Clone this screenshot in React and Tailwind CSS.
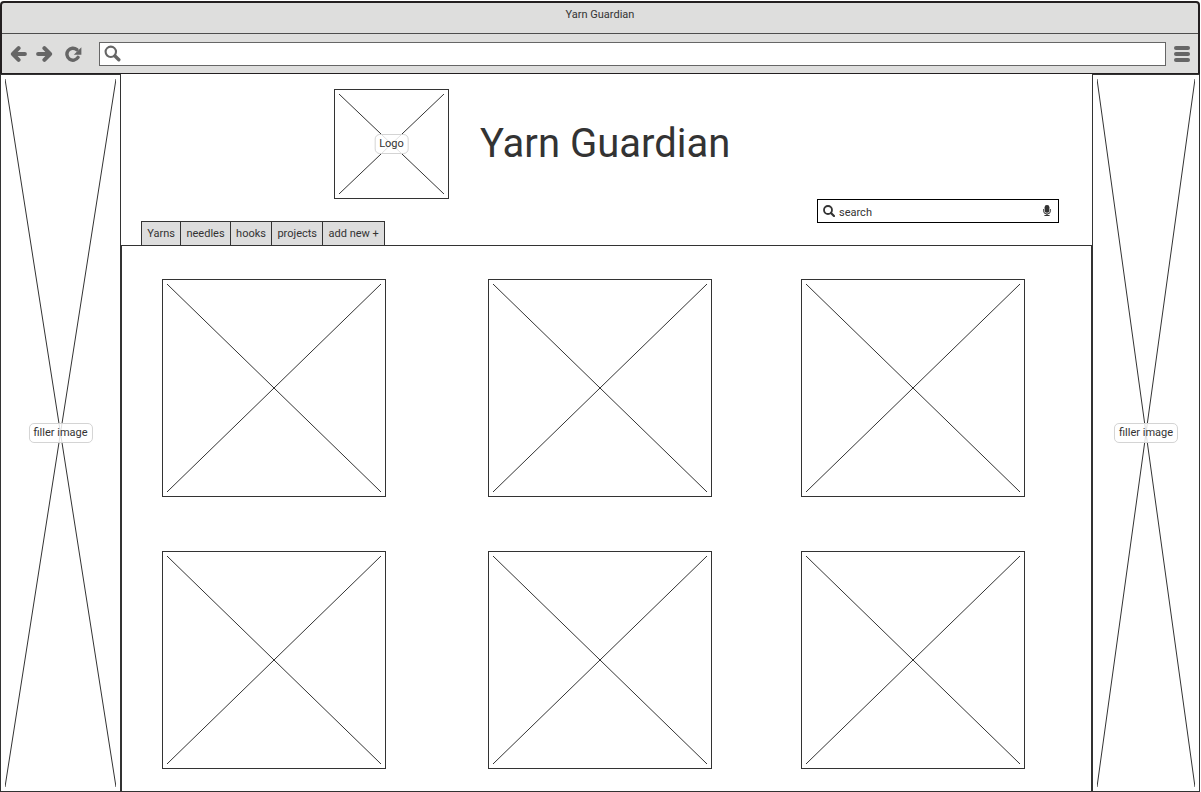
import React from "react";

const tabs = ["Yarns", "needles", "hooks", "projects", "add new +"];
const yarns = [1, 2, 3, 4, 5, 6];

function Placeholder({ label, className }) {
  return (
    <figure className={`relative border border-[#333333] bg-white p-1 ${className}`}>
      <svg
        className="absolute inset-1 h-[calc(100%-8px)] w-[calc(100%-8px)]"
        viewBox="0 0 100 100"
        preserveAspectRatio="none"
        stroke="#333333"
        aria-hidden="true"
      >
        <path d="M0 0L100 100M100 0L0 100" vectorEffect="non-scaling-stroke" />
      </svg>
      {label && (
        <figcaption className="absolute top-1/2 left-1/2 -translate-x-1/2 -translate-y-1/2 rounded-[5px] border border-[#d4d4d4] bg-white/85 px-1 text-[11px] leading-[18px] whitespace-nowrap">
          {label}
        </figcaption>
      )}
    </figure>
  );
}

function ArrowIcon({ flip }) {
  return (
    <svg
      width="17"
      height="16"
      viewBox="0 0 17 16"
      fill="none"
      stroke="#666666"
      strokeWidth="4"
      strokeLinecap="round"
      strokeLinejoin="round"
      className={flip ? "rotate-180" : ""}
      aria-hidden="true"
    >
      <path d="M8.6 2.2L2.9 8l5.7 5.8M3.8 8H14.9" />
    </svg>
  );
}

function ReloadIcon() {
  return (
    <svg width="17" height="16" viewBox="0 0 17 16" aria-hidden="true">
      <path
        d="M13 11.4A6 6 0 1 1 11.8 3.6"
        fill="none"
        stroke="#666666"
        strokeWidth="3.4"
        strokeLinecap="round"
      />
      <path d="M16.4 1.2V8.8H8.8Z" fill="#666666" />
    </svg>
  );
}

function MagnifierIcon() {
  return (
    <svg width="17" height="17" viewBox="0 0 17 17" fill="none" stroke="#666666" aria-hidden="true">
      <circle cx="6.8" cy="6.8" r="5.2" strokeWidth="2.1" />
      <path d="M11 11L14.8 14.7" strokeWidth="3.4" strokeLinecap="round" />
    </svg>
  );
}

function BrowserBar() {
  return (
    <header className="mt-px rounded-t border-2 border-b border-[#231f20] bg-[#dededd]">
      <p className="h-[31px] border-b border-[#4d4d4d] text-center text-[11px] leading-6">
        Yarn Guardian
      </p>
      <div className="flex h-[39px] items-center px-2">
        <nav className="flex items-center" aria-label="Browser">
          <button type="button" aria-label="Back" className="mr-[9px]">
            <ArrowIcon />
          </button>
          <button type="button" aria-label="Forward" className="mr-3">
            <ArrowIcon flip />
          </button>
          <button type="button" aria-label="Reload" className="mr-[17px]">
            <ReloadIcon />
          </button>
        </nav>
        <label className="flex h-6 flex-1 items-center gap-1 border border-[#666666] bg-white px-1">
          <MagnifierIcon />
          <input type="text" aria-label="Address" className="min-w-0 flex-1 outline-none" />
        </label>
        <button type="button" aria-label="Menu" className="ml-2">
          <svg width="16" height="16" viewBox="0 0 16 16" fill="#666666" aria-hidden="true">
            <rect width="16" height="4" rx="2" />
            <rect y="6" width="16" height="4" rx="2" />
            <rect y="12" width="16" height="4" rx="2" />
          </svg>
        </button>
      </div>
    </header>
  );
}

function SearchBox() {
  return (
    <label className="mr-[33px] flex h-6 w-[242px] items-center self-start border border-black bg-white px-[5px]">
      <svg width="12" height="12" viewBox="0 0 12 12" fill="none" stroke="#333333" aria-hidden="true">
        <circle cx="5" cy="5" r="4" strokeWidth="1.8" />
        <path d="M8 8L11 11" strokeWidth="2.2" strokeLinecap="round" />
      </svg>
      <input
        type="search"
        placeholder="search"
        aria-label="Search"
        className="ml-1 h-full min-w-0 flex-1 pt-0.5 text-[11px] outline-none placeholder:text-[#333333]"
      />
      <svg width="12" height="12" viewBox="0 0 12 12" aria-hidden="true">
        <rect x="3.6" y="0" width="4.8" height="7.8" rx="2.2" fill="#333333" />
        <path
          d="M2.5 4.6V5.6a3.5 3.5 0 0 0 7 0V4.6M6 9.2V10.5M3.8 10.5H8.2"
          fill="none"
          stroke="#333333"
          strokeLinecap="round"
        />
      </svg>
    </label>
  );
}

export default function App() {
  return (
    <div className="flex min-h-screen flex-col bg-white pr-px font-['Roboto',sans-serif] text-[#333333]">
      <BrowserBar />
      <div className="flex flex-1 items-stretch">
        <aside className="flex w-[121px] shrink-0">
          <Placeholder label="filler image" className="flex-1" />
        </aside>
        <main className="flex min-w-0 flex-1 flex-col">
          <div className="flex items-center gap-[31px] pt-[15px] pl-[213px]">
            <Placeholder label="Logo" className="h-[110px] w-[115px] shrink-0" />
            <h1 className="text-[40px] leading-[50px] whitespace-nowrap">Yarn Guardian</h1>
          </div>
          <div className="flex h-[46px] items-end justify-between">
            <nav className="ml-5 flex h-6 w-[244px] border-l border-[#333333]" aria-label="Sections">
              {tabs.map((tab) => (
                <button
                  key={tab}
                  type="button"
                  className="grow border-t border-r border-[#333333] bg-[#dddddd] px-[5px] pt-px text-[11px] whitespace-nowrap"
                >
                  {tab}
                </button>
              ))}
            </nav>
            <SearchBox />
          </div>
          <section className="grid flex-1 grid-cols-[326fr_313fr_290fr] content-start gap-y-[54px] border border-[#333333] pt-[33px] pb-[22px] pl-10">
            {yarns.map((yarn) => (
              <Placeholder key={yarn} className="h-[218px] w-56" />
            ))}
          </section>
        </main>
        <aside className="flex w-[108px] shrink-0">
          <Placeholder label="filler image" className="flex-1" />
        </aside>
      </div>
    </div>
  );
}
